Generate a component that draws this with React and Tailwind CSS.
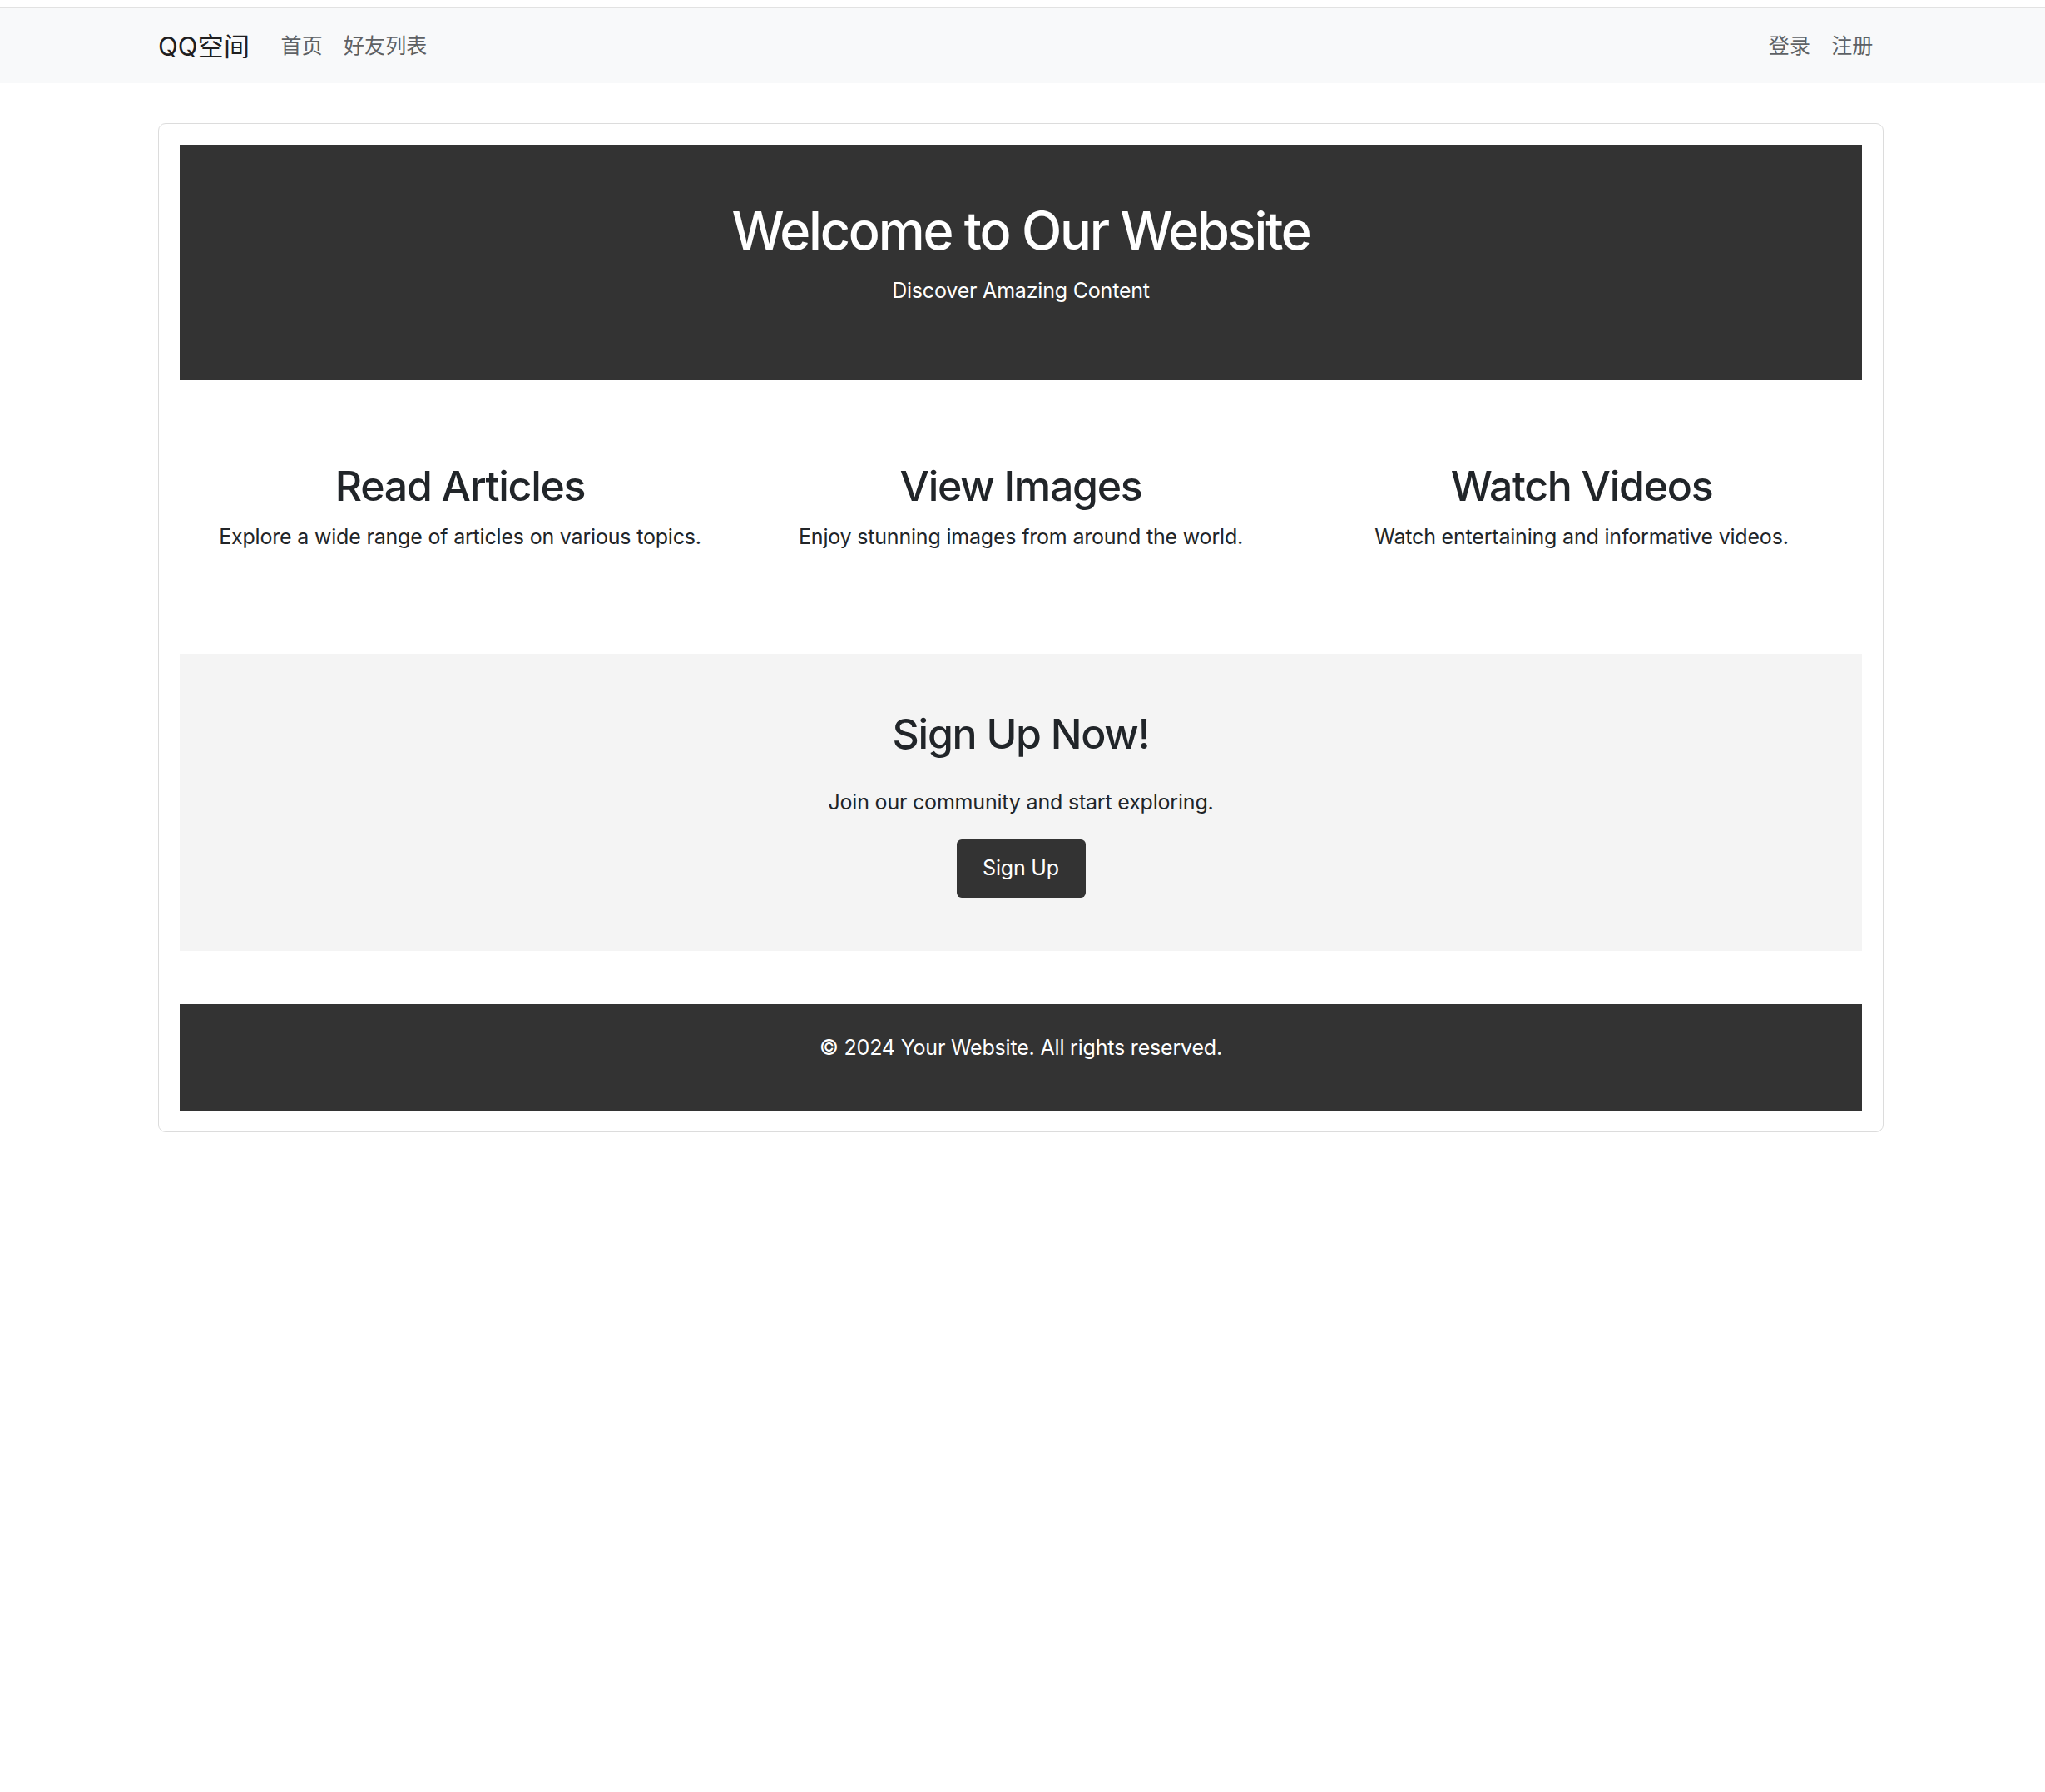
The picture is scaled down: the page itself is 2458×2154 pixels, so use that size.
import React from 'react'

const features = [
  { title: 'Read Articles', text: 'Explore a wide range of articles on various topics.' },
  { title: 'View Images', text: 'Enjoy stunning images from around the world.' },
  { title: 'Watch Videos', text: 'Watch entertaining and informative videos.' },
]

// Top navigation bar

function Navbar() {
  return (
    <nav className="mt-[8px] border-t-2 border-[#e2e2e2] bg-[#f8f9fa] tracking-[0.01em]">
      <div className="ml-[190px] flex h-[90px] w-[2074px] items-center justify-between pt-[2px]">
        <div className="flex items-center">
          <a className="mr-[25px] text-[31px] leading-[1.5] text-[#000000e6]" href="#">
            QQ空间
          </a>
          <a className="px-[12.5px] text-[25px] leading-[1.5] text-[#5e6164]" href="#">首页</a>
          <a className="px-[12.5px] text-[25px] leading-[1.5] text-[#5e6164]" href="#">好友列表</a>
        </div>
        <div className="flex items-center">
          <a className="px-[12.5px] text-[25px] leading-[1.5] text-[#5e6164]" href="#">登录</a>
          <a className="px-[12.5px] text-[25px] leading-[1.5] text-[#5e6164]" href="#">注册</a>
        </div>
      </div>
    </nav>
  )
}

export default function App() {
  return (
    <div
      className="min-h-[2154px] bg-white text-[#212529] tracking-[-0.012em]"
      style={{ fontFamily: 'Inter, "Noto Sans CJK SC", "Noto Sans", sans-serif' }}
    >
      <Navbar />

      <main className="ml-[190px] mt-[48px] w-[2074px] rounded-[9px] border border-[#dcdcdc] p-[25px]">
        {/* Hero */}
        <section className="bg-[#333333] px-6 pt-[66px] pb-[63px] text-center text-white">
          <h1 className="mb-[15.5px] text-[63px] font-medium leading-[1.2] tracking-[-0.035em]">
            Welcome to Our Website
          </h1>
          <p className="mb-[25px] text-[25px] leading-[1.5]">Discover Amazing Content</p>
        </section>

        {/* Features */}
        <section className="grid grid-cols-3 py-[97px] text-center">
          {features.map(f => (
            <div key={f.title}>
              <h2 className="mb-[13.5px] text-[50px] font-medium leading-[1.2] tracking-[-0.026em]">{f.title}</h2>
              <p className="mb-[24px] text-[25px] leading-[1.5]">{f.text}</p>
            </div>
          ))}
        </section>

        {/* Sign up */}
        <section className="flex flex-col items-center bg-[#f4f4f4] pt-[66px] pb-[64px] text-center">
          <h2 className="mb-[34px] text-[50px] font-medium leading-[1.2] tracking-[-0.026em]">Sign Up Now!</h2>
          <p className="mb-[26px] text-[25px] leading-[1.5]">Join our community and start exploring.</p>
          <button className="h-[70px] w-[155px] rounded-[6px] bg-[#333333] text-[25px] leading-[1.5] text-white">
            Sign Up
          </button>
        </section>

        {/* Footer */}
        <footer className="mt-[64px] bg-[#333333] px-6 pt-[34px] pb-[31px] text-center text-white">
          <p className="mb-[25px] text-[25px] leading-[1.5]">© 2024 Your Website. All rights reserved.</p>
        </footer>
      </main>
    </div>
  )
}
